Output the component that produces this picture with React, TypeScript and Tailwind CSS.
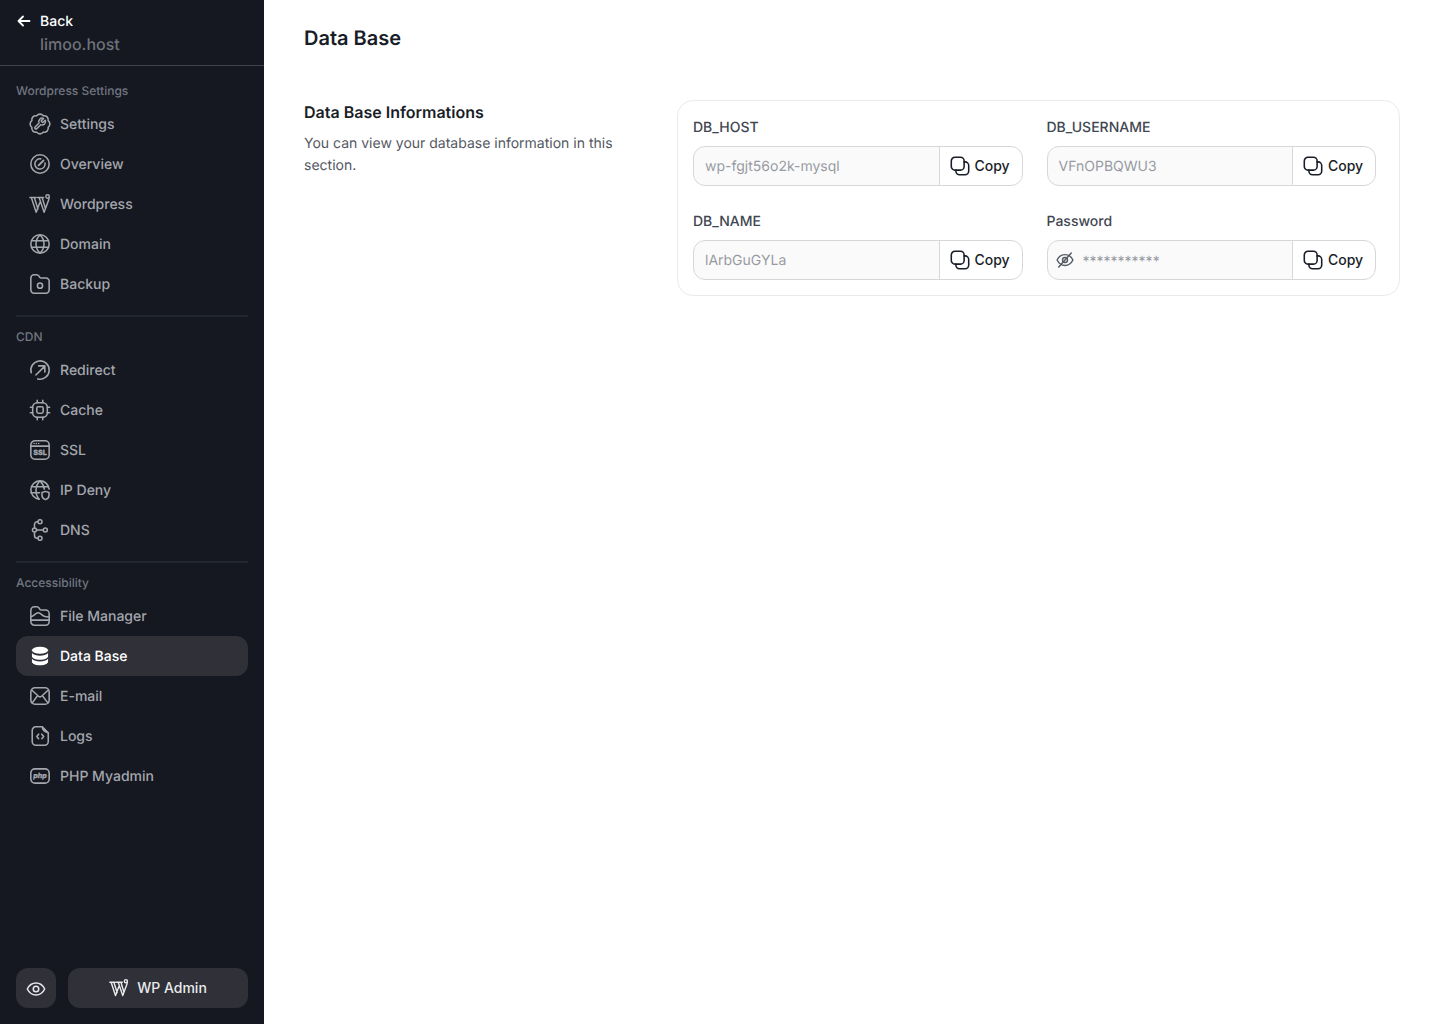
import type { ReactNode } from "react";

type IconProps = { className?: string; sw?: number };

function Svg({ className = "w-[22px] h-[22px]", sw = 1.7, children }: IconProps & { children: ReactNode }) {
  return (
    <svg
      viewBox="0 0 24 24"
      fill="none"
      stroke="currentColor"
      strokeWidth={sw}
      strokeLinecap="round"
      strokeLinejoin="round"
      className={className}
    >
      {children}
    </svg>
  );
}

const SettingsIcon = (p: IconProps) => (
  <Svg {...p}>
    <path d="M3.1 8.4a4.4 4.4 0 0 1 5.3-5.3 4.4 4.4 0 0 1 7.2 0 4.4 4.4 0 0 1 5.3 5.3 4.4 4.4 0 0 1 0 7.2 4.4 4.4 0 0 1-5.3 5.3 4.4 4.4 0 0 1-7.2 0 4.4 4.4 0 0 1-5.3-5.3 4.4 4.4 0 0 1 0-7.2Z" />
    <g transform="translate(4.4 4.4) scale(0.62)" strokeWidth="2.6">
      <path d="M14.7 6.3a1 1 0 0 0 0 1.4l1.6 1.6a1 1 0 0 0 1.4 0l3.77-3.77a6 6 0 0 1-7.94 7.94l-6.91 6.91a2.12 2.12 0 0 1-3-3l6.91-6.91a6 6 0 0 1 7.94-7.94l-3.76 3.76z" />
    </g>
  </Svg>
);

const OverviewIcon = (p: IconProps) => (
  <Svg {...p}>
    <circle cx="12" cy="12" r="10" />
    <path d="M17.5 11a5.6 5.6 0 1 1-4.7-4.6" />
    <path d="M10.5 13.5 15.8 8.2" strokeWidth="2" />
  </Svg>
);

const WpIcon = (p: IconProps) => (
  <Svg {...p} sw={p.sw ?? 1.6}>
    <path d="M1 5h6.5M2.5 5l5.3 16 4.2-11M5.8 5l4 12.5M9 5h7M11 5l5.5 16 5-13.5c.4-1 .3-1.800 0-2.500M14.300 5l3.700 12" />
    <circle cx="20.3" cy="3.8" r="1.9" />
  </Svg>
);

const GlobeIcon = (p: IconProps) => (
  <Svg {...p}>
    <circle cx="12" cy="12" r="10" />
    <path d="M2.8 8.5h18.4M2.8 15.5h18.4" />
    <path d="M12 2c-5.8 5.5-5.8 14.5 0 20M12 2c5.8 5.5 5.8 14.5 0 20" />
  </Svg>
);

const BackupIcon = (p: IconProps) => (
  <Svg {...p}>
    <path d="M2 5.5A3.5 3.5 0 0 1 5.5 2h2.8c1.100 0 2 .5 2.600 1.400l.7 1.100c.4.600 1 1 1.700 1h5.200A3.500 3.500 0 0 1 22 9v9.500a3.500 3.500 0 0 1-3.500 3.500h-13A3.500 3.500 0 0 1 2 18.500Z" />
    <circle cx="12" cy="13.8" r="2.8" />
  </Svg>
);

const RedirectIcon = (p: IconProps) => (
  <Svg {...p}>
    <path d="M2.5 15A10 10 0 1 1 9.5 21.7" />
    <path d="M7.5 17.5 17 8M10.5 7.5h6.8v6.8" />
  </Svg>
);

const CacheIcon = (p: IconProps) => (
  <Svg {...p}>
    <rect x="4" y="4" width="16" height="16" rx="5" />
    <rect x="8.5" y="8.5" width="7" height="7" rx="1.8" />
    <path d="M9 1.5V4M15 1.5V4M9 20v2.5M15 20v2.5M1.5 9H4M1.5 15H4M20 9h2.5M20 15h2.5" />
  </Svg>
);

const SslIcon = (p: IconProps) => (
  <Svg {...p}>
    <rect x="2" y="2" width="20" height="20" rx="4.5" />
    <path d="M2 7.8h20" />
    <path d="M5.5 5h.01M8 5h.01M10.5 5h.01" />
    <text x="12" y="17.9" textAnchor="middle" fontSize="7.8" fontWeight="800" fontFamily="Inter, sans-serif" fill="currentColor" stroke="currentColor" strokeWidth="0.3">
      SSL
    </text>
  </Svg>
);

const IpDenyIcon = (p: IconProps) => (
  <Svg {...p}>
    <path d="M22 11A10 10 0 1 0 11 22" />
    <path d="M2.8 8.5h18.4M2.2 15h9.3" />
    <path d="M12 2c-5.5 5.5-5.8 14.5-1 20M12 2c2.7 2.6 4.3 5.7 4.7 9" />
    <path d="M18 13.5l3.8 1.3v3.3c0 2.1-1.7 3.7-3.8 4.4-2.1-.7-3.8-2.300-3.800-4.400v-3.300Z" />
  </Svg>
);

const DnsIcon = (p: IconProps) => (
  <Svg {...p}>
    <circle cx="12" cy="3" r="2.2" />
    <circle cx="6" cy="12" r="2.2" />
    <circle cx="17.8" cy="12" r="2.2" />
    <circle cx="12" cy="21" r="2.2" />
    <path d="M9.8 3H9a3 3 0 0 0-3 3v3.8M8.2 12h7.4M6 14.2V18a3 3 0 0 0 3 3h.8" />
  </Svg>
);

const FileManagerIcon = (p: IconProps) => (
  <Svg {...p}>
    <path d="M2 6a4 4 0 0 1 4-4h2.5c1.100 0 2 .5 2.600 1.400l.6 1c.4.700 1.100 1.100 1.900 1.100H18a4 4 0 0 1 4 4v8.500a4 4 0 0 1-4 4H6a4 4 0 0 1-4-4Z" />
    <path d="M2 16.500h20" />
    <path d="M2.500 12.500c3-.3 4.500-4 7.500-4 2.500 0 4 2.500 6 3.500 1.700.8 3.800 1 5.500 1" />
  </Svg>
);

const DatabaseIcon = ({ className = "w-[22px] h-[22px]" }: IconProps) => (
  <svg viewBox="0 0 24 24" fill="currentColor" className={className}>
    <ellipse cx="12" cy="5.8" rx="8.8" ry="3.8" />
    <path d="M3.2 8.800v3.400c0 2.100 3.900 3.800 8.800 3.800s8.800-1.700 8.800-3.800V8.800c-1.700 2-5 3-8.800 3s-7.100-1-8.800-3Z" />
    <path d="M3.2 15v3.400c0 2.100 3.900 3.800 8.800 3.800s8.800-1.700 8.800-3.800V15c-1.700 2-5 3-8.800 3s-7.100-1-8.800-3Z" />
  </svg>
);

const MailIcon = (p: IconProps) => (
  <Svg {...p}>
    <rect x="2" y="3" width="20" height="18" rx="4.5" />
    <path d="M3 5.5 10 12c1.200 1.100 2.800 1.100 4 0l7-6.500M3.500 19.500 9.500 11.500M20.500 19.500 14.500 11.500" />
  </Svg>
);

const LogsIcon = (p: IconProps) => (
  <Svg {...p}>
    <path d="M14.5 2H7.5a4 4 0 0 0-4 4v12a4 4 0 0 0 4 4h9.5a4 4 0 0 0 4-4V8.5" />
    <path d="M14.5 2c0 3 2 5.500 6.500 6.500M14.500 2l6.500 6.500" />
    <path d="M10.5 10 8.5 12.5l2 2.500M14 10l2 2.500-2 2.500" />
  </Svg>
);

const PhpIcon = (p: IconProps) => (
  <Svg {...p}>
    <rect x="2" y="4.2" width="20" height="15.6" rx="4.5" />
    <text x="12" y="14.4" textAnchor="middle" fontSize="7.8" fontWeight="800" fontStyle="italic" fontFamily="Inter, sans-serif" fill="currentColor" stroke="currentColor" strokeWidth="0.3">
      php
    </text>
  </Svg>
);

const EyeIcon = (p: IconProps) => (
  <Svg {...p}>
    <path d="M2.5 12c2-4 5.500-6.500 9.500-6.500s7.500 2.500 9.500 6.500c-2 4-5.500 6.500-9.500 6.500S4.500 16 2.500 12Z" />
    <circle cx="12" cy="12" r="3" />
  </Svg>
);

const EyeOffIcon = (p: IconProps) => (
  <Svg {...p}>
    <path d="M2.5 12c2-4 5.500-6.500 9.500-6.500s7.500 2.500 9.500 6.500c-2 4-5.500 6.500-9.500 6.500S4.500 16 2.500 12Z" />
    <circle cx="12" cy="12" r="3" />
    <path d="M19.5 3.5 4.5 20.5" />
  </Svg>
);

const CopyIcon = (p: IconProps) => (
  <Svg {...p}>
    <rect x="2.5" y="2.5" width="14" height="14" rx="4" />
    <path d="M16.5 7.5h1a4 4 0 0 1 4 4v6a4 4 0 0 1-4 4h-6a4 4 0 0 1-4-4v-1" />
  </Svg>
);

const BackArrow = () => (
  <svg viewBox="0 0 16 16" fill="none" stroke="currentColor" strokeWidth="1.8" strokeLinecap="round" strokeLinejoin="round" className="w-4 h-4">
    <path d="M13.5 8H3M7 3.5 2.5 8 7 12.5" />
  </svg>
);

type NavItem = { label: string; icon: (p: IconProps) => ReactNode; active?: boolean };

const sections: { title: string; items: NavItem[] }[] = [
  {
    title: "Wordpress Settings",
    items: [
      { label: "Settings", icon: SettingsIcon },
      { label: "Overview", icon: OverviewIcon },
      { label: "Wordpress", icon: WpIcon },
      { label: "Domain", icon: GlobeIcon },
      { label: "Backup", icon: BackupIcon },
    ],
  },
  {
    title: "CDN",
    items: [
      { label: "Redirect", icon: RedirectIcon },
      { label: "Cache", icon: CacheIcon },
      { label: "SSL", icon: SslIcon },
      { label: "IP Deny", icon: IpDenyIcon },
      { label: "DNS", icon: DnsIcon },
    ],
  },
  {
    title: "Accessibility",
    items: [
      { label: "File Manager", icon: FileManagerIcon },
      { label: "Data Base", icon: DatabaseIcon, active: true },
      { label: "E-mail", icon: MailIcon },
      { label: "Logs", icon: LogsIcon },
      { label: "PHP Myadmin", icon: PhpIcon },
    ],
  },
];

function Field({ label, value, secret }: { label: string; value: string; secret?: boolean }) {
  return (
    <div className="flex flex-col gap-2">
      <label className="text-sm leading-[22px] font-medium text-[#414651] translate-y-px">{label}</label>
      <div className="flex h-10">
        <div
          className={`flex-1 flex items-center gap-2 bg-[#fafafa] border border-[#d5d7da] rounded-l-xl text-sm text-[#979aa2] ${
            secret ? "pl-[7px]" : "pl-[11px]"
          }`}
        >
          {secret && <EyeOffIcon className="w-5 h-5 text-[#535862]" />}
          <span className={secret ? "translate-y-[2px]" : "translate-y-px"}>{value}</span>
        </div>
        <button className="flex items-center gap-1 w-[84px] pl-[9px] -ml-px bg-white border border-[#d5d7da] rounded-r-xl text-sm font-medium text-[#181d27]">
          <CopyIcon className="w-[22px] h-[22px]" sw={1.7} />
          Copy
        </button>
      </div>
    </div>
  );
}

export default function App() {
  return (
    <div className="flex min-h-screen h-[1024px] bg-white font-['Inter',sans-serif] [text-rendering:geometricPrecision]">
      <aside className="w-[264px] shrink-0 flex flex-col bg-[#151820] text-[#a4a7ae]">
        <div className="h-[66px] shrink-0 border-b border-[#3f424a] pl-4 pt-[10px]">
          <div className="flex items-center gap-2 text-sm font-medium leading-[22px] text-white">
            <BackArrow />
            <span className="translate-y-px">Back</span>
          </div>
          <div className="pl-6 text-base leading-6 font-medium text-[#6f727b]">limoo.host</div>
        </div>
        <nav className="flex-1 px-4 pt-4">
          {sections.map((s, i) => (
            <div key={s.title} className={i > 0 ? "mt-[11px] pt-[11px] border-t-2 border-[#22262e]" : ""}>
              <div className="text-xs leading-[18px] font-medium text-[#717680] mb-1">{s.title}</div>
              {s.items.map((item) => (
                <a
                  key={item.label}
                  href="#"
                  className={`flex items-center gap-[9px] h-10 px-[13px] rounded-xl text-sm font-medium ${
                    item.active ? "bg-[#2f3038] text-white" : "text-[#a4a7ae]"
                  }`}
                >
                  <item.icon className="w-[22px] h-[22px]" />
                  <span className="translate-y-px">{item.label}</span>
                </a>
              ))}
            </div>
          ))}
        </nav>
        <div className="flex gap-3 px-4 pb-4">
          <button className="w-10 h-10 flex items-center justify-center rounded-xl bg-[#2f3038] text-[#e5e7eb]">
            <EyeIcon className="w-[22px] h-[22px] mt-px" />
          </button>
          <button className="flex-1 h-10 flex items-center justify-center gap-2 rounded-xl bg-[#2f3038] text-sm font-medium text-[#e9eaeb]">
            <WpIcon className="w-5 h-5" sw={1.7} />
            WP Admin
          </button>
        </div>
      </aside>
      <main className="flex-1 px-10 pt-6">
        <h1 className="text-xl leading-7 font-semibold text-[#181d27]">Data Base</h1>
        <div className="flex mt-[48px]">
          <div className="w-[373px] shrink-0">
            <h2 className="text-base leading-6 font-semibold text-[#181d27]">Data Base Informations</h2>
            <p className="mt-[9px] w-[330px] text-sm leading-[22px] text-[#535862]">
              You can view your database information in this section.
            </p>
          </div>
          <div className="flex-1 h-[196px] grid grid-cols-2 gap-x-6 gap-y-6 content-start border border-[#e9eaeb] rounded-2xl pl-[15px] pr-[23px] pt-[15px]">
            <Field label="DB_HOST" value="wp-fgjt56o2k-mysql" />
            <Field label="DB_USERNAME" value="VFnOPBQWU3" />
            <Field label="DB_NAME" value="lArbGuGYLa" />
            <Field label="Password" value="***********" secret />
          </div>
        </div>
      </main>
    </div>
  );
}
